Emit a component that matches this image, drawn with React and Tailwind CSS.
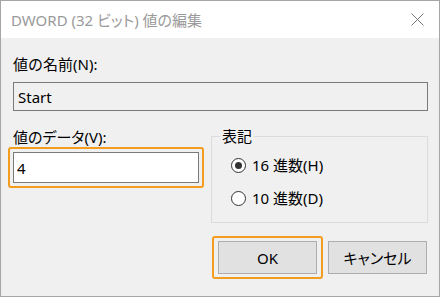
import React, { useState } from "react";

const font = { fontFamily: '"Noto Sans", "Noto Sans CJK JP", sans-serif' };

function Radio({ checked, label, onClick }) {
  return (
    <div className="flex items-center h-[20px] pl-[19px] cursor-default" onClick={onClick}>
      <span className="w-[15px] h-[15px] rounded-full border border-[#333] bg-white flex items-center justify-center">
        {checked && <span className="w-[7px] h-[7px] rounded-full bg-[#333]" />}
      </span>
      <span className="ml-[6px]">{label}</span>
    </div>
  );
}

export default function App() {
  const [value, setValue] = useState("4");
  const [base, setBase] = useState("hex");

  return (
    <div
      className="w-[440px] h-[297px] border border-[#a6a6a6] flex flex-col text-[15px] leading-[20px] text-black"
      style={font}
    >
      {/* title bar */}
      <div className="h-[37px] bg-white flex items-center justify-between pl-[10px] pr-[15px]">
        <span className="text-[#9a9a9a] [font-feature-settings:'palt']">DWORD (32 ビット) 値の編集</span>
        <svg width="13" height="13" viewBox="0 0 13 13">
          <path d="M0.5 0.5 L12.5 12.5 M12.5 0.5 L0.5 12.5" stroke="#777" strokeWidth="1" />
        </svg>
      </div>

      <div className="flex-1 bg-[#f0f0f0] pl-[12px] pr-[11px]">
        <div className="mt-[16px]">値の名前(N):</div>
        <div className="mt-[8px] h-[29px] border border-[#7a7a7a] bg-[#f0f0f0] flex items-center pl-[4px]">
          Start
        </div>

        <div className="flex mt-[15px]">
          {/* left column */}
          <div className="w-[191px] -ml-[5px] pt-[1px]">
            <div className="ml-[5px] [font-feature-settings:'palt']">値のデータ(V):</div>
            <div className="w-[196px] border-2 border-[#f39c1e] rounded-[3px] p-[3px]">
              <input
                className="w-full h-[31px] border border-[#7a7a7a] bg-white pl-[3px] outline-none"
                value={value}
                onChange={e => setValue(e.target.value)}
              />
            </div>
          </div>

          {/* right column */}
          <fieldset className="ml-[12px] flex-1 h-[97px] border border-[#dcdcdc]">
            <legend className="ml-[8px] px-[2px]">表記</legend>
            <div className="mt-[9px]">
              <Radio checked={base === "hex"} label="16 進数(H)" onClick={() => setBase("hex")} />
            </div>
            <div className="mt-[13px]">
              <Radio checked={base === "dec"} label="10 進数(D)" onClick={() => setBase("dec")} />
            </div>
          </fieldset>
        </div>

        <div className="flex justify-end items-center mt-[13px] mr-[1px]">
          <div className="border-2 border-[#f39c1e] rounded-[3px] px-[4px] py-[3px]">
            <button className="w-[99px] h-[33px] bg-[#e1e1e1] border border-[#adadad]">OK</button>
          </div>
          <button className="ml-[5px] w-[99px] h-[33px] bg-[#e1e1e1] border border-[#adadad] [font-feature-settings:'palt']">
            キャンセル
          </button>
        </div>
      </div>
    </div>
  );
}
